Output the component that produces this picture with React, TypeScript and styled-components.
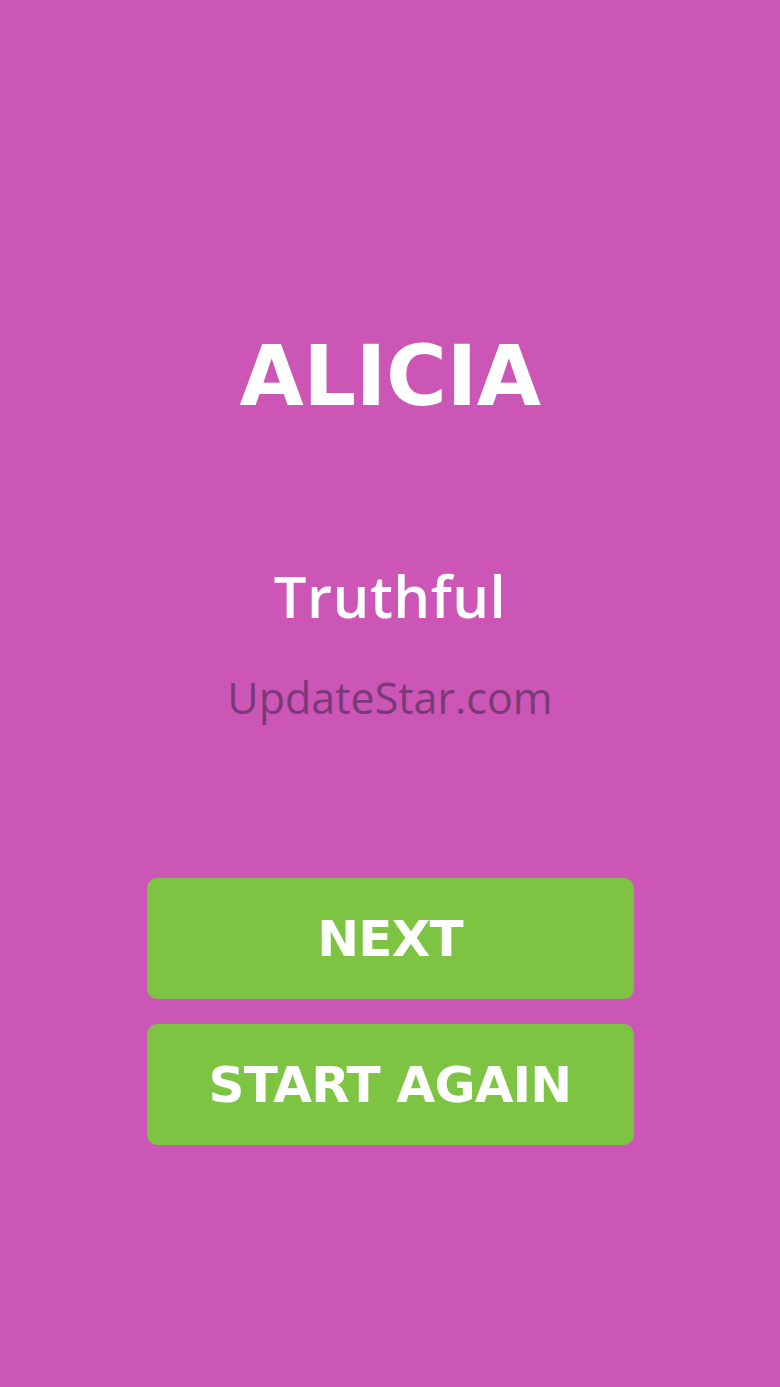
import React from "react";
import styled, { createGlobalStyle } from "styled-components";

const Global = createGlobalStyle`
  html, body { margin: 0; padding: 0; background: #cb56b5; }
  #root { min-height: 100vh; }
`;

const Screen = styled.main`
  width: 780px;
  height: 1387px;
  background: #cb56b5;
  display: flex;
  flex-direction: column;
  align-items: center;
  box-sizing: border-box;
  padding-top: 327px;
`;

const Name = styled.h1`
  margin: 0;
  font-family: "DejaVu Sans", sans-serif;
  font-weight: 700;
  font-size: 83px;
  line-height: 100px;
  color: #ffffff;
  letter-spacing: -0.5px;
`;

const Trait = styled.div`
  margin-top: 134px;
  font-family: "Open Sans", sans-serif;
  font-weight: 600;
  font-size: 58px;
  line-height: 70px;
  color: #ffffff;
  letter-spacing: 0.5px;
`;

const Watermark = styled.div`
  margin-top: 39px;
  font-family: "Open Sans", sans-serif;
  font-weight: 400;
  font-size: 43px;
  line-height: 56px;
  color: #7b3978;
`;

const Actions = styled.div`
  margin-top: 152px;
  display: flex;
  flex-direction: column;
  gap: 25px;
  width: 487px;
`;

const ActionButton = styled.button`
  height: 121px;
  border: none;
  border-radius: 10px;
  background: #7dc443;
  color: #ffffff;
  font-family: "DejaVu Sans", sans-serif;
  font-weight: 700;
  font-size: 50px;
  letter-spacing: -0.8px;
  cursor: pointer;
  display: flex;
  align-items: center;
  justify-content: center;
  padding: 0;
`;

export default function App() {
  return (
    <>
      <Global />
      <Screen>
        <Name>ALICIA</Name>
        <Trait>Truthful</Trait>
        <Watermark>UpdateStar.com</Watermark>
        <Actions>
          <ActionButton>NEXT</ActionButton>
          <ActionButton>START AGAIN</ActionButton>
        </Actions>
      </Screen>
    </>
  );
}
